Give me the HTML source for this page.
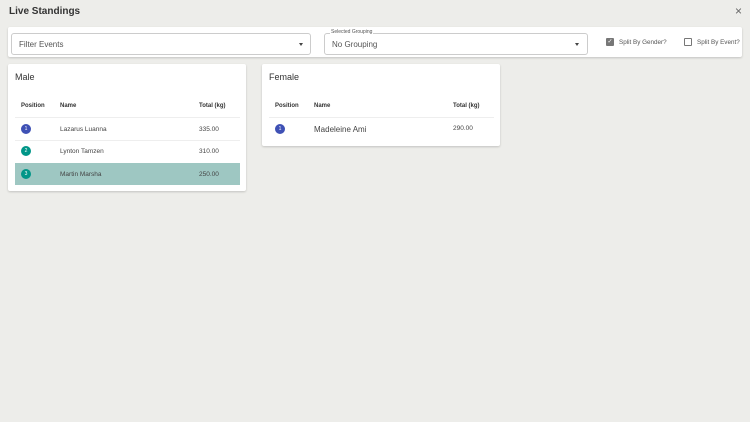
<!DOCTYPE html>
<html><head><style>
*{box-sizing:border-box;margin:0;padding:0}
body{width:750px;height:422px;background:#ededea;font-family:"Liberation Sans",sans-serif;color:#333;position:relative;overflow:hidden}
.abs{position:absolute}
.card{position:absolute;background:#fff;border-radius:2px;box-shadow:0 1px 2px rgba(0,0,0,.18)}
.field{position:absolute;border:1px solid #ccc;border-radius:3px;font-size:8px;color:#555;padding-left:7px;line-height:21px}
.arrow{position:absolute;width:0;height:0;border-left:2.5px solid transparent;border-right:2.5px solid transparent;border-top:3px solid #444}
.t{position:absolute;font-size:6.5px;color:#444}
.h{position:absolute;font-size:6px;color:#333;font-weight:bold}
.line{position:absolute;height:1px;background:#eee}
.b{position:absolute;width:10px;height:10px;border-radius:50%;color:#fff;font-size:5px;text-align:center;line-height:10px}
</style></head><body>
<div class="abs" style="left:9px;top:6px;font-size:10px;font-weight:bold;color:#333">Live Standings</div>
<div class="abs" style="left:735px;top:4px;font-size:12px;color:#666">×</div>

<div class="card" style="left:8px;top:27px;width:734px;height:30px"></div>
<div class="field" style="left:11px;top:33px;width:300px;height:22px">Filter Events</div>
<div class="arrow" style="left:299px;top:43px"></div>
<div class="field" style="left:324px;top:33px;width:264px;height:22px">No Grouping</div>
<div class="abs" style="left:330px;top:29px;font-size:5px;color:#555;background:#fff;padding:0 1px">Selected Grouping</div>
<div class="arrow" style="left:575px;top:43px"></div>
<div class="abs" style="left:606px;top:38px;width:8px;height:8px;background:#777;border-radius:1px;color:#fff;font-size:6px;line-height:8px;text-align:center">✓</div>
<div class="abs" style="left:619px;top:38.5px;font-size:6.3px;color:#555">Split By Gender?</div>
<div class="abs" style="left:684px;top:38px;width:8px;height:8px;border:1px solid #777;border-radius:1px"></div>
<div class="abs" style="left:697px;top:38.5px;font-size:6.3px;color:#555">Split By Event?</div>

<div class="card" style="left:8px;top:64px;width:238px;height:127px"></div>
<div class="abs" style="left:15px;top:72px;font-size:9px;color:#333">Male</div>
<div class="h" style="left:21px;top:103px">Position</div>
<div class="h" style="left:60px;top:103px">Name</div>
<div class="h" style="left:199px;top:103px">Total (kg)</div>
<div class="line" style="left:15px;top:117px;width:225px"></div>
<div class="b" style="left:21px;top:124px;background:#3f51b5">1</div>
<div class="t" style="left:60px;top:125.5px">Lazarus Luanna</div>
<div class="t" style="left:199px;top:125.5px">335.00</div>
<div class="line" style="left:15px;top:140px;width:225px"></div>
<div class="b" style="left:21px;top:146px;background:#009688">2</div>
<div class="t" style="left:60px;top:148px">Lynton Tamzen</div>
<div class="t" style="left:199px;top:148px">310.00</div>
<div class="abs" style="left:15px;top:163px;width:225px;height:22px;background:#9ec7c2"></div>
<div class="b" style="left:21px;top:169px;background:#009688">3</div>
<div class="t" style="left:60px;top:170.5px">Martin Marsha</div>
<div class="t" style="left:199px;top:170.5px">250.00</div>

<div class="card" style="left:262px;top:64px;width:238px;height:82px"></div>
<div class="abs" style="left:269px;top:72px;font-size:9px;color:#333">Female</div>
<div class="h" style="left:275px;top:103px">Position</div>
<div class="h" style="left:314px;top:103px">Name</div>
<div class="h" style="left:453px;top:103px">Total (kg)</div>
<div class="line" style="left:269px;top:117px;width:225px"></div>
<div class="b" style="left:275px;top:124px;background:#3f51b5">1</div>
<div class="abs" style="left:314px;top:125px;font-size:8px;color:#444">Madeleine Ami</div>
<div class="t" style="left:453px;top:125px">290.00</div>
</body></html>
